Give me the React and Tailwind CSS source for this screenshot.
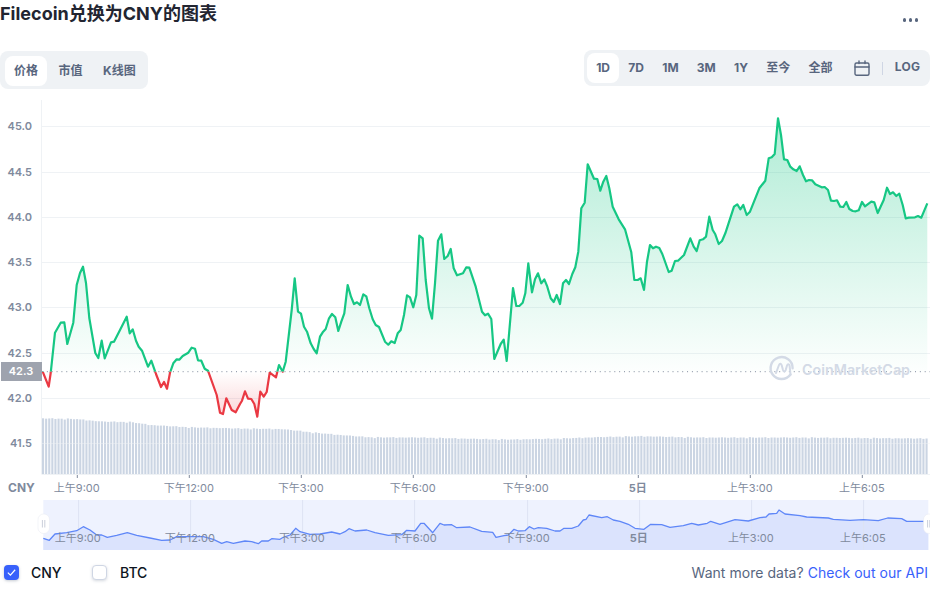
const LINE = "42.7,371.7 48.7,386.7 50.7,373 55,332.7 60.7,322.7 64.3,322.3 67.3,344 73.3,322.7 76.7,285 80,273 83,266.7 86,283 89.3,318 95.3,353 98.3,358 101.7,340.7 104.7,358.3 111,342.3 114,341.7 120,330 126.7,316.7 129.7,333.3 132.7,329.3 136,340.7 138.7,346.7 142,350.7 148,366.7 151.3,360.7 156,374 161,387 164,382 167,388.7 170,372.7 173.3,363.3 176.7,359.3 179.3,359.7 182.7,356 188.3,352.7 191.7,347.7 195,348.7 198,360.3 201.3,360.7 204.7,368.7 208,370.7 216.7,395 220,412.7 223,414 226.3,398.3 231.7,410 235.7,412.3 240,404 242,400.7 245,391.3 248,398.7 251.3,399 254.3,404 257.3,416.7 260.3,391.7 263.7,396.7 266.7,392 269.7,372.7 276,377.3 279,365 282.7,371.7 285.7,361.7 291.7,310 294.7,278.3 298,311.7 301,313.7 304,326.7 307,331.7 310.7,343.3 313.7,349 316.7,353.3 320,336.7 322.7,332.3 325.7,329 329,318.3 332,314 335.3,317.3 338.3,331 341.3,321.7 344.3,313.3 347.7,285 351,296.7 354,304 357,302.3 360,305 363.3,294.3 366.3,296.3 369.3,308.3 372.7,319.3 375.7,325 379,327 385,341.7 388.3,344.7 391.3,341.3 394.7,343 397.7,333.3 400.7,330 404,315 407,295.3 410,297.3 413.3,307.3 416.3,295 419.3,235.7 422.7,238.3 425.7,280 429,308.3 432,318.7 435,283.3 438,240.7 441.3,234.3 444.3,259 447.7,256 450.7,249 453.7,268.3 457,275.3 463,273.3 466.3,267.3 469.3,267.7 475.7,286.7 482,311.7 485,315.3 488,313.7 491.3,319 494.3,359 497.7,351 500.7,344 503.7,339.7 506.7,361 513,288 516.3,306 519.3,306 522.7,302.7 525.3,293.3 528.3,263.3 532,292.3 535,279.3 538,273.3 541.3,283.3 544.3,279.3 547.3,286.7 550.7,298.3 553.7,302 556.7,295 560,304 563,283.3 566,280 569,284 572.3,274 575.3,267.3 578.3,251.7 581.3,208.3 584.7,202.7 587.7,164.3 594,178.7 597.3,179 600.3,190.7 603.3,181.7 606.3,176 609.3,188.3 612.7,206.7 618.7,219.3 625,229.3 631.3,252.3 634.3,280 637.7,280 640.7,278.3 644,290 647,261.7 650,245 653,248.3 656,246.7 659.3,248 662.3,254 668.7,272 671.7,270.7 675,261 678,260.7 684,255 690.3,238.3 693.7,246.7 696.7,251 699.7,240.3 703,239.3 706,236.7 709.3,216.7 712.7,230 715.3,234.3 718.7,244 722,241 725.3,233.3 734,206.7 737.3,204.3 740.3,209.3 743.3,205 746.7,215 750,211.7 759.3,188.3 765.3,180.7 768.7,158.3 771.7,157.3 774.7,154 778,118.3 781,135 784,159.3 787.3,160 790.3,166.7 793.3,169.3 796.7,171 799.7,166.3 803,175 806,181.3 809,180 812,180.3 815.3,184.3 821.7,187.3 824.7,187 828,190 831,200.7 834,201 837,200.3 840.3,206.7 843.3,207 846.3,202 849.3,209 852.7,211 855.7,211.3 858.7,210.3 862,202 865,206.3 871.3,201.7 874.3,202.3 877.7,213 883.7,200 887,187.7 890,194 893,192.3 896.3,196 899.3,193.7 902.7,205 905.7,218.3 908.7,217.7 915,217.3 918,216 921.3,217.7 927.3,203.3";

const BRUSH = "43.3,538.3 49.3,540.3 55,534 66.7,532.7 76.7,530.7 83.3,526.7 90,530 96.7,535 101.7,535 107.3,537.3 116.7,535.3 127.3,532.7 136.7,535.3 150,538 161.7,540.3 170,540 176.7,536.7 190,536.7 203.3,536.7 213.3,539.3 221.7,543.3 226.7,541.7 233.3,543.3 245,541 251.7,541.7 258.3,543.7 261.7,541 268.3,541 271.7,538.7 280,539.3 283.3,537.3 290,535 295.7,528.3 300,531.7 310,534.3 320,534 331.7,532 340,534 345,531.7 349,528.7 355,531 366.7,530 375,532.7 388.3,535.3 401.7,534.7 406.7,530.3 415,531 420.7,523.3 424,523.3 432.7,532.7 440,523.3 444,525 451.7,524.7 456.7,527.7 470,527 481.7,531.3 492.7,532.3 496,537.3 504,535.7 508.3,535 514,529.3 518.3,531 525,530.7 529.3,526.7 534,529 538.3,527.7 546.7,528.3 555,531 560,531 564,528.3 571.7,528.3 578.3,526 583.3,520 586,519.3 589,515 601.7,517.7 607.3,516.7 613.3,520 620,521.3 628.3,524.3 635,528.3 644,529.3 650.7,524.3 661.7,524.7 670,527.3 683.3,525.7 691.7,523.3 698.3,525 707.3,523.3 710.7,521.3 720,524.3 735,519.7 748.3,521 760,517.7 766,517 769,514 776.7,513.3 779,510 785,514 800,515.7 806.7,517 828.3,518 833.3,519.3 850,520.3 863.3,519.7 878.3,520.7 887.7,518 901.7,518.7 906.7,521.3 928.3,521.3";

const VOL = [[42, 418.3], [75, 419], [100, 421.5], [130, 422], [150, 425], [190, 427.3], [240, 428.5], [280, 429], [300, 431], [310, 432.3], [340, 435], [370, 437.3], [420, 437.5], [480, 439], [510, 439.5], [560, 438.5], [600, 437], [640, 436.2], [700, 437.5], [800, 437.5], [925, 438.5]];
const JITTER = [0, 0.3, 0, -0.3, 0.4, 0, 0, 0.8, -0.4, 0, 0.3, 0, 0, -0.3, 0.5, 0, 0, 0.2, 0, -0.2];

function volumeTop(x) {
  for (let i = 1; i < VOL.length; i++) {
    if (x <= VOL[i][0]) {
      const [x0, y0] = VOL[i - 1];
      const [x1, y1] = VOL[i];
      return y0 + ((y1 - y0) * (x - x0)) / (x1 - x0);
    }
  }
  return VOL[VOL.length - 1][1];
}

const BARS = Array.from({ length: 286 }, (_, i) => {
  const x = 42 + i * 3.1;
  return { x, y: volumeTop(x) + JITTER[i % JITTER.length] };
});

const GRID = [
  ["45.0", 126.5], ["44.5", 172.5], ["44.0", 217.5], ["43.5", 262.5],
  ["43.0", 307.5], ["42.5", 353.5], ["42.0", 398.5], ["41.5", 443.5],
];

const TICKS = [
  ["上午9:00", 77.3], ["下午12:00", 189.3], ["下午3:00", 301.3], ["下午6:00", 413.3],
  ["下午9:00", 526.3], ["5日", 638.3], ["上午3:00", 750.3], ["上午6:05", 862.3],
];

const RANGES = ["1D", "7D", "1M", "3M", "1Y", "至今", "全部"];

function Chart() {
  const last = LINE.split(" ").pop().split(",")[0];
  const area = `${LINE} ${last},371.7 42.7,371.7`;
  const brushArea = `${BRUSH} 928.3,550 43.3,550`;
  return (
    <svg viewBox="0 100 930 452" className="block w-[930px] h-[452px]">
      <defs>
        <linearGradient id="up" gradientUnits="userSpaceOnUse" x1="0" y1="118" x2="0" y2="372">
          <stop offset="0" stopColor="#16c784" stopOpacity="0.34" />
          <stop offset="1" stopColor="#16c784" stopOpacity="0.01" />
        </linearGradient>
        <linearGradient id="down" gradientUnits="userSpaceOnUse" x1="0" y1="372" x2="0" y2="418">
          <stop offset="0" stopColor="#ea3943" stopOpacity="0" />
          <stop offset="1" stopColor="#ea3943" stopOpacity="0.22" />
        </linearGradient>
        <clipPath id="above"><rect x="0" y="100" width="930" height="271.7" /></clipPath>
        <clipPath id="below"><rect x="0" y="371.7" width="930" height="103" /></clipPath>
      </defs>

      {BARS.map((b) => (
        <rect key={b.x} x={b.x} y={b.y} width="2.1" height={474.5 - b.y} fill="#cbd5e3" />
      ))}

      {GRID.map(([label, y]) => (
        <g key={label}>
          <line x1="42" x2="930" y1={y} y2={y} stroke="#eff2f5" strokeOpacity={label === "41.5" ? 0.45 : 1} />
          <text x="32" y={y + 3.5} textAnchor="end" className="fill-[#808a9d] text-[11px] font-semibold">{label}</text>
        </g>
      ))}
      <line x1="41.5" x2="41.5" y1="100" y2="474.5" stroke="#eff2f5" />
      <line x1="42" x2="930" y1="474.5" y2="474.5" stroke="#eff2f5" />

      <polygon points={area} fill="url(#up)" clipPath="url(#above)" />
      <polygon points={area} fill="url(#down)" clipPath="url(#below)" />

      <line x1="42" x2="930" y1="371.7" y2="371.7" stroke="#808a9d" strokeDasharray="1 3.85" />

      <polyline points={LINE} fill="none" stroke="#16c784" strokeWidth="2.2" strokeLinejoin="round" clipPath="url(#above)" />
      <polyline points={LINE} fill="none" stroke="#ea3943" strokeWidth="2.2" strokeLinejoin="round" clipPath="url(#below)" />

      <rect x="1" y="362" width="41" height="19" fill="#9ea3ae" />
      <text x="21" y="375" textAnchor="middle" className="fill-white text-[11px] font-semibold">42.3</text>

      <g fill="none" stroke="#d3dae6" strokeWidth="2.4" strokeLinecap="round" strokeLinejoin="round">
        <path d="M790.5 374.5 A11 11 0 1 1 792.6 368.2" />
        <path d="M776 373 L779 365 C779.8 363 781.2 363.4 781.7 365.2 L783 370 C783.6 372 785 372 785.7 370 L787 365.5 C787.7 363.6 789.2 363.8 789.6 365.8 L790.5 374.5" strokeWidth="2" />
      </g>
      <text x="802" y="374.5" className="fill-[#d3dae6] text-[14.3px] font-semibold">CoinMarketCap</text>

      <text x="8" y="491.5" className="fill-[#808a9d] text-[12px] font-bold">CNY</text>
      {TICKS.map(([label, x]) => (
        <g key={label}>
          <line x1={x} x2={x} y1="475" y2="478" stroke="#808a9d" />
          <text x={x - 0.5} y="492" textAnchor="middle" className={`fill-[#808a9d] text-[11px] ${label === "5日" ? "font-bold" : "font-normal"}`}>{label}</text>
        </g>
      ))}

      <rect x="43.3" y="500" width="885" height="50" fill="#eef2fe" />
      <polygon points={brushArea} fill="#dbe3fd" />
      {TICKS.map(([label, x]) => (
        <line key={label} x1={x + 1.3} x2={x + 1.3} y1="500" y2="550" stroke="#dde3f3" />
      ))}
      <polyline points={BRUSH} fill="none" stroke="#5f87f8" strokeWidth="1.3" strokeLinejoin="round" />
      {TICKS.map(([label, x]) => (
        <text key={label} x={x + 0.5} y="542" textAnchor="middle" className={`fill-[#808a9d] text-[11px] ${label === "5日" ? "font-bold" : "font-normal"}`}>{label}</text>
      ))}

      <rect x="38" y="514" width="11.5" height="19.5" rx="5.5" fill="#ffffff" stroke="#e6e9f0" strokeWidth="0.5" />
      <path d="M42.4 520 V527.5 M44.8 520 V527.5" stroke="#bcc3d0" strokeWidth="0.8" />
      <rect x="923.5" y="514" width="11.5" height="19.5" rx="5.5" fill="#ffffff" stroke="#e6e9f0" strokeWidth="0.5" />
      <path d="M927.6 520 V527.5 M929.8 520 V527.5" stroke="#bcc3d0" strokeWidth="0.8" />
    </svg>
  );
}

export default function App() {
  return (
    <div className="w-[930px] h-[600px] overflow-hidden bg-white font-[Inter,'Noto_Sans_CJK_SC',sans-serif]">
      <div className="h-[50px] flex items-start justify-between">
        <h2 className="text-[18px] leading-[28px] font-bold text-[#222531]">Filecoin兑换为CNY的图表</h2>
        <div className="flex gap-[2.5px] mt-[18px] mr-[12px]">
          <span className="w-[3.5px] h-[3.5px] rounded-full bg-[#58667e]" />
          <span className="w-[3.5px] h-[3.5px] rounded-full bg-[#58667e]" />
          <span className="w-[3.5px] h-[3.5px] rounded-full bg-[#58667e]" />
        </div>
      </div>

      <div className="h-[50px] flex items-start justify-between">
        <div className="mt-px w-[148px] h-[38px] flex gap-[2.5px] rounded-lg bg-[#eff2f5] pl-[5px] pt-[5px] pb-[3px]">
          <button className="h-[30px] px-[9px] rounded-lg bg-white text-[12px] font-bold text-[#58667e]">价格</button>
          <button className="h-[30px] px-[9px] rounded-lg text-[12px] font-bold text-[#58667e]">市值</button>
          <button className="h-[30px] px-[9px] rounded-lg text-[12px] font-bold text-[#58667e]">K线图</button>
        </div>

        <div className="w-[346px] h-[36px] flex items-center rounded-lg bg-[#eff2f5] pl-[3px]">
          {RANGES.map((r) => (
            <button key={r} className={`h-[30px] px-[9.15px] rounded-lg text-[12px] font-bold text-[#58667e] ${r === "1D" ? "bg-white" : ""}`}>{r}</button>
          ))}
          <svg viewBox="0 0 16 16" className="w-[16px] h-[16px] ml-[12px]" fill="none" stroke="#58667e" strokeWidth="1.4" strokeLinecap="round">
            <rect x="1" y="3" width="14" height="12.3" rx="1.5" />
            <path d="M1 7H15M5 1V3.5M11 1V3.5" />
          </svg>
          <span className="w-px h-[13px] ml-[12px] bg-[#cfd6e4]" />
          <span className="ml-[12px] -mt-[2px] text-[12px] tracking-[0.02em] font-bold text-[#58667e]">LOG</span>
        </div>
      </div>

      <Chart />

      <div className="h-[41px] flex items-center justify-between pl-[4px] pr-[2px]">
        <div className="flex items-center">
          <span className="w-[15px] h-[15px] flex items-center justify-center rounded-[4px] bg-[#3861fb] shadow-[0_1px_3px_rgba(88,102,126,0.35)]">
            <svg viewBox="0 0 12 12" className="w-[11px] h-[11px]" fill="none" stroke="#ffffff" strokeWidth="1.3">
              <path d="M2 6.2L4.8 9L10 3" />
            </svg>
          </span>
          <span className="ml-[12px] w-[61px] text-[14px] font-medium text-[#0d1421]">CNY</span>
          <span className="w-[15px] h-[15px] rounded-[4px] bg-white border border-[#cfd6e4] shadow-[0_1px_3px_rgba(88,102,126,0.25)]" />
          <span className="ml-[13px] text-[14px] font-medium text-[#0d1421]">BTC</span>
        </div>
        <p className="text-[14px] tracking-[0.0025em] text-[#58667e]">Want more data? <a className="text-[#3861fb]">Check out our API</a></p>
      </div>
    </div>
  );
}
